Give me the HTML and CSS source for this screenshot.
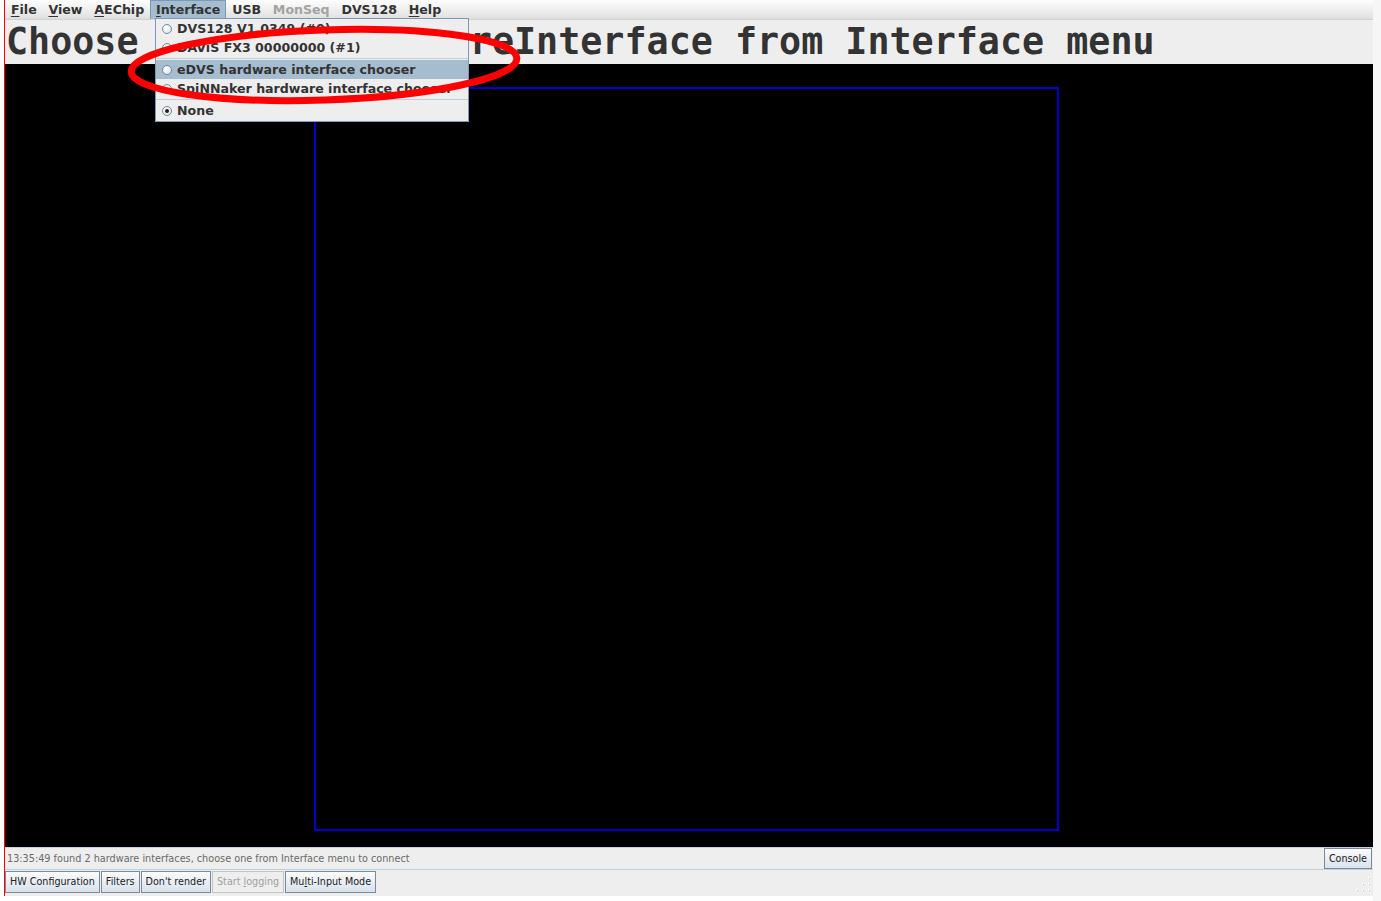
FILE: index.html
```html
<!DOCTYPE html>
<html>
<head>
<meta charset="utf-8">
<link rel="stylesheet" href="styles.css">
</head>
<body>
<div class="screen">
  <div class="gutter-left"></div>
  <div class="window">
    <div class="menubar">
      <span class="menu"><u>F</u>ile</span>
      <span class="menu"><u>V</u>iew</span>
      <span class="menu"><u>A</u>EChip</span>
      <span class="menu open"><u>I</u>nterface</span>
      <span class="menu">USB</span>
      <span class="menu disabled">MonSeq</span>
      <span class="menu">DVS128</span>
      <span class="menu"><u>H</u>elp</span>
    </div>
    <div class="titlebar">Choose a valid HardwareInterface from Interface menu</div>
    <div class="canvas">
      <div class="frame"></div>
    </div>
    <div class="statusbar">
      <span class="status-text">13:35:49 found 2 hardware interfaces, choose one from Interface menu to connect</span>
      <span class="btn console">Console</span>
    </div>
    <div class="buttonbar">
      <span class="btn">HW Configuration</span>
      <span class="btn">Filters</span>
      <span class="btn">Don't render</span>
      <span class="btn off">Start <u>l</u>ogging</span>
      <span class="btn">Mu<u>l</u>ti-Input Mode</span>
      <span class="grip">
        <svg width="18" height="18" viewBox="0 0 18 18">
          <rect x="15" y="3" width="2" height="2" fill="#ffffff"/>
          <rect x="16" y="4" width="1" height="1" fill="#bdbdbd"/>
          <rect x="9" y="9" width="2" height="2" fill="#ffffff"/>
          <rect x="15" y="9" width="2" height="2" fill="#ffffff"/>
          <rect x="10" y="10" width="1" height="1" fill="#bdbdbd"/>
          <rect x="16" y="10" width="1" height="1" fill="#bdbdbd"/>
          <rect x="3" y="15" width="2" height="2" fill="#ffffff"/>
          <rect x="9" y="15" width="2" height="2" fill="#ffffff"/>
          <rect x="15" y="15" width="2" height="2" fill="#ffffff"/>
          <rect x="4" y="16" width="1" height="1" fill="#bdbdbd"/>
          <rect x="10" y="16" width="1" height="1" fill="#bdbdbd"/>
          <rect x="16" y="16" width="1" height="1" fill="#bdbdbd"/>
        </svg>
      </span>
    </div>
  </div>
  <div class="gutter-right"></div>

  <div class="popup">
    <div class="item"><span class="radio"></span>DVS128 V1.0349 (#0)</div>
    <div class="item"><span class="radio"></span>DAViS FX3 00000000 (#1)</div>
    <div class="sep"></div>
    <div class="item hl"><span class="radio"></span>eDVS hardware interface chooser</div>
    <div class="item"><span class="radio"></span>SpiNNaker hardware interface chooser</div>
    <div class="sep"></div>
    <div class="item"><span class="radio on"></span>None</div>
  </div>

  <svg class="annotation" width="440" height="110" viewBox="0 0 440 110">
    <ellipse cx="200" cy="47" rx="193" ry="35" fill="none" stroke="#ff0000" stroke-width="7" transform="rotate(-2 200 47)"/>
  </svg>
</div>
</body>
</html>
```

FILE: styles.css
```css
* { box-sizing: border-box; }
html, body { margin: 0; padding: 0; }
body {
  width: 1381px;
  height: 901px;
  background: #ffffff;
  overflow: hidden;
  font-family: "DejaVu Sans", "Liberation Sans", sans-serif;
}
.screen {
  position: relative;
  display: flex;
  width: 1381px;
  height: 901px;
}
.gutter-left {
  width: 4px;
  flex: none;
}
.window {
  width: 1369px;
  height: 896px;
  flex: none;
  border-left: 1px solid #ff0000;
  background: #eeeeee;
  display: flex;
  flex-direction: column;
}
.gutter-right {
  flex: 1;
  background: #f6f6f6;
}

/* menu bar */
.menubar {
  height: 20px;
  flex: none;
  display: flex;
  align-items: stretch;
  background: linear-gradient(#fdfdfd, #e6e6e6 80%, #dedede);
  border-bottom: 1px solid #d2d2d2;
  font-weight: bold;
  font-size: 12.6px;
  color: #333333;
}
.menu {
  padding: 0 5.9px;
  line-height: 19px;
  white-space: nowrap;
}
.menu u { text-decoration-thickness: 1px; text-underline-offset: 2px; }
.menu.open {
  background: #a6bccf;
  border: 1px solid #7d98b8;
  border-bottom: none;
  line-height: 18px;
  padding: 0 4.9px;
}
.menu.disabled { color: #a3a3a3; }

/* title */
.titlebar {
  height: 44px;
  flex: none;
  padding-left: 1px;
  font-family: "DejaVu Sans Mono", "Liberation Mono", monospace;
  font-weight: bold;
  font-size: 36.7px;
  line-height: 44px;
  color: #333333;
  white-space: nowrap;
  overflow: hidden;
  background: #eeeeee;
}

/* canvas */
.canvas {
  height: 783px;
  flex: none;
  background: #000000;
  padding: 23px 0 0 309px;
}
.frame {
  width: 745px;
  height: 744px;
  border: 2px solid #0000cc;
}

/* status bar */
.statusbar {
  height: 23px;
  flex: none;
  display: flex;
  align-items: center;
  justify-content: space-between;
  border-top: 1px solid #c3d3e3;
  border-bottom: 1px solid #b8cfe5;
  padding: 0 1px 0 2px;
  background: #eeeeee;
}
.status-text {
  font-size: 9.7px;
  color: #6a6a6a;
  white-space: nowrap;
}
.btn {
  display: inline-block;
  height: 22px;
  line-height: 20px;
  padding: 0 4px;
  font-size: 9.6px;
  color: #222222;
  white-space: nowrap;
  border: 1px solid #7a8a99;
  background: linear-gradient(#fbfcfd, #e9eef4 50%, #d8e2ec);
  margin-right: 1px;
}
.btn.console {
  height: 21px;
  line-height: 19px;
  margin-right: 0;
}
.btn.off {
  color: #a0a0a0;
  border-color: #c4c4c4;
  background: #eeeeee;
}
.btn u { text-decoration-thickness: 1px; }

/* button bar */
.buttonbar {
  height: 25px;
  flex: none;
  display: flex;
  align-items: flex-start;
  padding-top: 1px;
  background: #eeeeee;
}
.grip {
  margin-left: auto;
  margin-right: 2px;
  margin-top: 3px;
  width: 18px;
  height: 18px;
}

/* popup menu */
.popup {
  position: absolute;
  left: 155px;
  top: 18px;
  width: 314px;
  padding: 0 0 1px;
  background: #eeeeee;
  border: 1px solid #7d98b8;
  font-weight: bold;
  font-size: 12.6px;
  color: #333333;
}
.item {
  height: 19px;
  display: flex;
  align-items: center;
  padding-left: 6px;
  white-space: nowrap;
}
.item.hl { background: #a6bccf; }
.radio {
  width: 10px;
  height: 10px;
  border-radius: 50%;
  border: 1px solid #7a8a99;
  background: radial-gradient(circle at 35% 35%, #ffffff, #d6dfe9);
  margin-right: 5px;
  flex: none;
  display: inline-flex;
  align-items: center;
  justify-content: center;
}
.radio.on::after {
  content: "";
  width: 4px;
  height: 4px;
  border-radius: 50%;
  background: #222222;
}
.sep {
  height: 3px;
  border-top: 1px solid #b8cfe5;
  margin-top: 1px;
  margin-bottom: -1px;
}

/* red hand-drawn annotation */
.annotation {
  position: absolute;
  left: 124px;
  top: 18px;
  pointer-events: none;
}
```
